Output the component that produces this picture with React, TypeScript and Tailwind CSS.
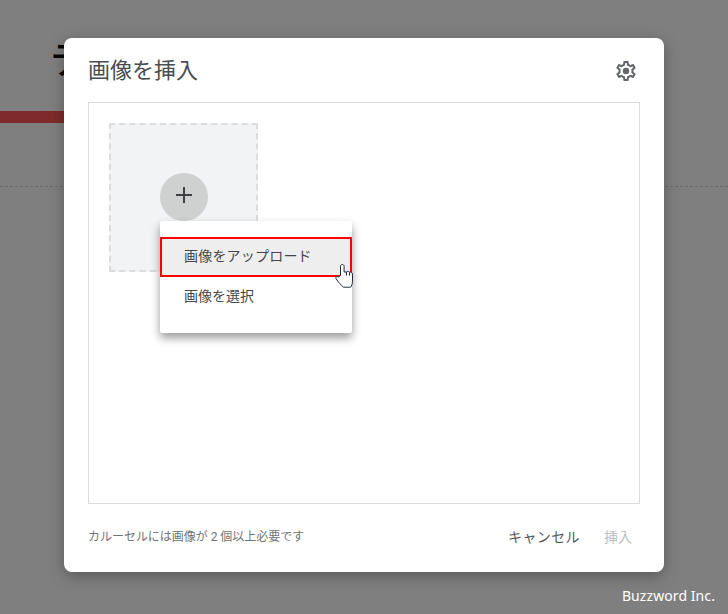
import React from 'react';

const jp = "font-['Roboto','Noto_Sans_CJK_JP',sans-serif]";

const GearIcon = () => (
  <svg width="24" height="24" viewBox="0 0 24 24" fill="#63676b" className="mt-[2px]">
    <path fillRule="evenodd" d="M19.43 12.98c.04-.32.07-.64.07-.98s-.03-.66-.07-.98l2.11-1.65c.19-.15.24-.42.12-.64l-2-3.46c-.12-.22-.39-.3-.61-.22l-2.49 1c-.52-.4-1.08-.73-1.69-.98l-.38-2.65C14.46 2.18 14.25 2 14 2h-4c-.25 0-.46.18-.49.42l-.38 2.65c-.61.25-1.17.59-1.69.98l-2.49-1c-.23-.09-.49 0-.61.22l-2 3.46c-.13.22-.07.49.12.64l2.11 1.65c-.04.32-.07.65-.07.98s.03.66.07.98l-2.11 1.65c-.19.15-.24.42-.12.64l2 3.46c.12.22.39.3.61.22l2.49-1c.52.4 1.08.73 1.69.98l.38 2.65c.03.24.24.42.49.42h4c.25 0 .46-.18.49-.42l.38-2.65c.61-.25 1.17-.59 1.69-.98l2.49 1c.23.09.49 0 .61-.22l2-3.46c.12-.22.07-.49-.12-.64l-2.11-1.65zM17.45 11.27c.04.31.05.52.05.73s-.02.43-.05.73l-.14 1.13.89.7 1.08.84-.7 1.21-1.27-.51-1.04-.42-.9.68c-.43.32-.84.56-1.25.73l-1.06.43-.16 1.13-.2 1.35h-1.4l-.19-1.35-.16-1.13-1.06-.43c-.43-.18-.83-.41-1.23-.71l-.91-.7-1.06.43-1.27.51-.7-1.21 1.08-.84.89-.7-.14-1.13c-.03-.31-.05-.54-.05-.74s.02-.43.05-.73l.14-1.13-.89-.7-1.08-.84.7-1.21 1.27.51 1.04.42.9-.68c.43-.32.84-.56 1.25-.73l1.06-.43.16-1.13.2-1.35h1.39l.19 1.35.16 1.13 1.06.43c.43.18.83.41 1.23.71l.91.7 1.06-.43 1.27-.51.7 1.21-1.07.85-.89.7.14 1.13z" />
    <circle cx="12" cy="12" r="3.2" />
  </svg>
);

const PlusIcon = () => (
  <svg width="24" height="24" viewBox="0 0 24 24" fill="#3c4043" className="mb-1">
    <path d="M20 13h-7v7h-2v-7H4v-2h7V4h2v7h7z" />
  </svg>
);

const HandCursor = () => (
  <svg width="19" height="25" viewBox="0 0 19 25" className="absolute left-[335px] top-[264px]">
    <path
      d="M5.5 11.5V2.2c0-2.2 3.6-2.2 3.6 0V8h2.6c.5-1 2-.8 2.3.2 1.5-.5 3.5 0 3.5 2v7c0 3-1 4.5-2 6H8.5C6 21 3 18 1 14.5c-.8-1.5 1-2.8 2.3-1.5z"
      fill="#ffffff"
      stroke="#252a38"
      strokeWidth="1"
    />
    <path d="M11.5 8v3.5M14.5 8.5v3" stroke="#252a38" strokeWidth="1" fill="none" />
  </svg>
);

export default function App() {
  return (
    <div className={`relative w-[728px] h-[614px] overflow-hidden bg-white ${jp}`}>
      {/* page behind the dialog */}
      <div className="absolute left-[50px] top-[32px] text-[38px] font-medium leading-[56px] text-[#111] whitespace-nowrap">テ</div>
      <div className="absolute left-0 top-[111px] w-[100px] h-[12px] bg-[#ff5656]"></div>
      <div className="absolute left-0 top-[186px] w-full border-t border-dashed border-[#d8d8d8]"></div>
      <div className="absolute inset-0 bg-[#000000]/50"></div>

      <div className="relative ml-[64px] mt-[38px] inline-block w-[600px] h-[534px] bg-white rounded-[8px] shadow-[0_4px_16px_rgba(0,0,0,0.3)] align-top">
        <div className="flex items-center justify-between pl-6 pr-[26px] h-[64px]">
          <span className="text-[22px] text-[#4a4d50] mt-[1px]">画像を挿入</span>
          <GearIcon />
        </div>

        <div className="mx-6 h-[402px] border border-[#dadce0] pl-5 pt-5">
          <div className="w-[149px] h-[149px] bg-[#f1f3f4] border-2 border-dashed border-[#dadce0] flex justify-center pt-[48px]">
            <div className="w-[48px] h-[48px] rounded-full bg-[#cfd1d0] flex items-center justify-center">
              <PlusIcon />
            </div>
          </div>
        </div>

        <div className="flex items-center justify-between pl-6 pr-8 h-[68px]">
          <span className="text-[12px] text-[#6f7377] mb-[3px] tracking-[-0.03px]">カルーセルには画像が 2 個以上必要です</span>
          <div className="flex items-center gap-[24px] mb-[2px]">
            <span className="text-[#55585b] text-[14px] tracking-[0.4px]">キャンセル</span>
            <span className="text-[#bcbec0] text-[14px]">挿入</span>
          </div>
        </div>
      </div>

      {/* menu */}
      <div className="absolute left-[160px] top-[221px] w-[192px] h-[112px] bg-white rounded-[2px] shadow-[0_5px_10px_rgba(0,0,0,0.4)] pt-4 text-[14px] text-[#444749]">
        <div className="h-[40px] bg-[#eeeeee] border-2 border-[#ff0000] pl-[22px] pb-[2px] flex items-center tracking-[0.2px]">画像をアップロード</div>
        <div className="h-[40px] pl-6 pb-[2px] flex items-center">画像を選択</div>
      </div>
      <HandCursor />

      <div className="absolute right-[13px] top-[586px] text-[14px] tracking-[0.08px] font-['Noto_Sans',sans-serif] text-white leading-5">Buzzword Inc.</div>
    </div>
  );
}
